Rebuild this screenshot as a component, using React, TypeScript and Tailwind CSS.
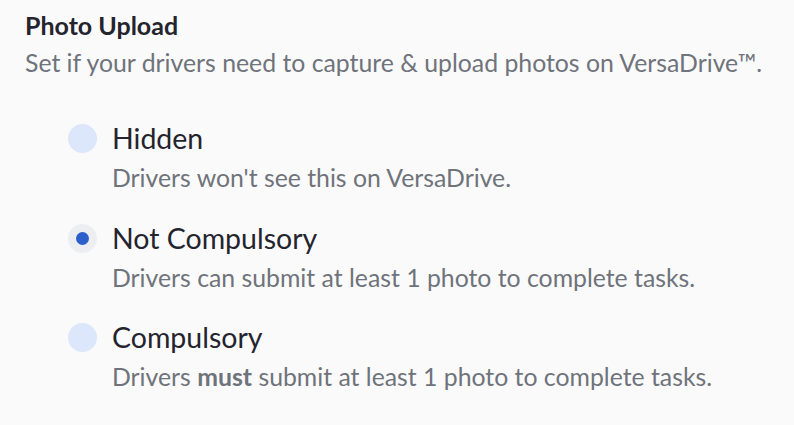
import React from "react";

const options = [
  { label: "Hidden", desc: <>Drivers won't see this on VersaDrive.</>, checked: false },
  { label: "Not Compulsory", desc: <>Drivers can submit at least 1 photo to complete tasks.</>, checked: true },
  {
    label: "Compulsory",
    desc: (
      <>
        Drivers <span className="font-bold">must</span> submit at least 1 photo to complete tasks.
      </>
    ),
    checked: false,
  },
];

export default function App() {
  return (
    <div
      className="w-[794px] h-[425px] bg-[#fafafa] pl-[25px] pt-[9px]"
      style={{ fontFamily: "Lato, 'Noto Sans', sans-serif" }}
    >
      <div className="text-[25px] font-bold text-[#24242e] leading-[32px]">Photo Upload</div>
      <div className="text-[24.8px] text-[#6f737b] leading-[32px] mt-[5.5px]">
        Set if your drivers need to capture &amp; upload photos on VersaDrive™.
      </div>
      <div className="flex flex-col pl-[43px] pt-[41.5px] gap-[25.5px]">
        {options.map((o) => (
          <div key={o.label} className="flex gap-[15px]">
            <div className="pt-[4px]">
              {o.checked ? (
                <div className="w-[29px] h-[29px] rounded-full bg-[#eceef2] flex items-center justify-center">
                  <div className="w-[13px] h-[13px] rounded-full bg-[#2d5fcc]" />
                </div>
              ) : (
                <div className="w-[29px] h-[29px] rounded-full bg-[#dde7fb]" />
              )}
            </div>
            <div className="flex flex-col">
              <div className="text-[28.5px] text-[#24242e] leading-[36px]">{o.label}</div>
              <div className="text-[24.8px] text-[#6f737b] leading-[32px] mt-[6px]">{o.desc}</div>
            </div>
          </div>
        ))}
      </div>
    </div>
  );
}
